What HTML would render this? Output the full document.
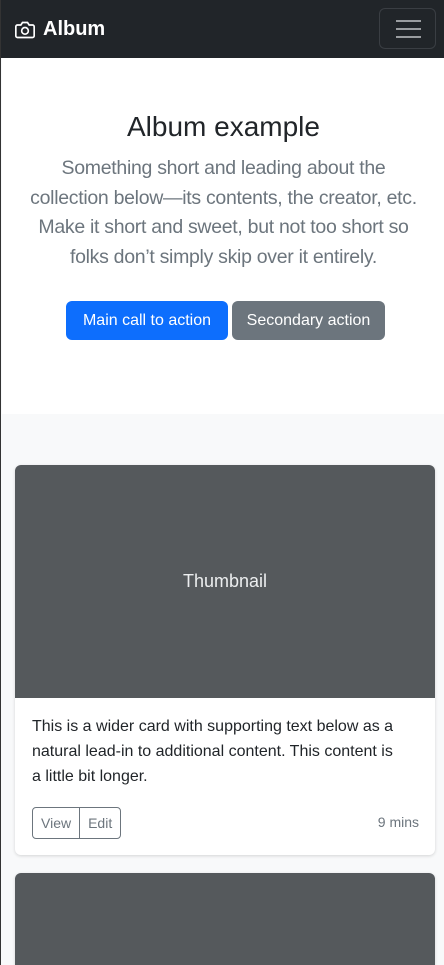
<!DOCTYPE html>
<html><head><meta charset="utf-8"><style>
*{box-sizing:border-box;margin:0;padding:0}
html{width:444px;height:965px;overflow:hidden}
body{width:444px;height:965px;overflow:hidden;font-family:"Liberation Sans",sans-serif;background:#f8f9fa;position:relative;border-left:1px solid #333}
.nav{position:absolute;left:0;top:0;width:444px;height:58px;background:#212529}
.brand{position:absolute;left:13px;top:18px;color:#fff;font-weight:bold;font-size:20px;display:flex;align-items:center;gap:7px}
.tog{position:absolute;left:378px;top:8px;width:57px;height:41px;border:1px solid #3a3e43;border-radius:6px}
.tog i{position:absolute;left:16px;width:25px;height:2px;background:#9a9da0}
.hero{position:absolute;left:1px;top:58px;width:443px;height:356px;background:#fff;text-align:center}
h1{font-weight:300;font-size:28px;color:#212529;position:absolute;top:53px;width:100%}
.lead{position:absolute;top:96px;left:0;right:0;font-size:19.5px;letter-spacing:-0.3px;font-weight:300;line-height:29.5px;color:#6c757d;white-space:nowrap}
.btn{position:absolute;top:243px;height:39px;border-radius:6px;color:#fff;font-size:16px;line-height:39px;text-align:center}
.card{position:absolute;left:14px;width:420px;background:#fff;border-radius:6px;box-shadow:0 1px 3px rgba(0,0,0,.15);overflow:hidden}
.thumb{background:#55595c;height:233px;color:#eceeef;font-size:18px;display:flex;align-items:center;justify-content:center}
.txt{padding:16px 10px 0 17px;font-size:16px;line-height:25px;color:#212529;white-space:nowrap}
.grp{position:absolute;left:17px;top:342px;height:32px;border:1px solid #6c757d;border-radius:4px;display:flex;font-size:14px;color:#6c757d}
.grp span{padding:0 8px;line-height:30px}
</style></head><body>
<div class="nav">
<div class="brand"><svg width="22" height="20" viewBox="0 0 24 24" fill="none" stroke="#fff" stroke-width="2"><path d="M23 19a2 2 0 0 1-2 2H3a2 2 0 0 1-2-2V8a2 2 0 0 1 2-2h4l2-3h6l2 3h4a2 2 0 0 1 2 2z"/><circle cx="12" cy="13" r="4"/></svg>Album</div>
<div class="tog"><i style="top:11px"></i><i style="top:19px"></i><i style="top:27px"></i></div>
</div>
<div class="hero">
<h1>Album example</h1>
<p class="lead">Something short and leading about the<br>collection below—its contents, the creator, etc.<br>Make it short and sweet, but not too short so<br>folks don’t simply skip over it entirely.</p>
<div class="btn" style="left:64px;width:162px;background:#0d6efd">Main call to action</div>
<div class="btn" style="left:230px;width:153px;background:#6c757d">Secondary action</div>
</div>
<div class="card" style="top:465px;height:390px">
<div class="thumb">Thumbnail</div>
<div class="txt">This is a wider card with supporting text below as a<br>natural lead-in to additional content. This content is<br>a little bit longer.</div>
<div class="grp"><span style="border-right:1px solid #6c757d">View</span><span>Edit</span></div>
<div style="position:absolute;right:16px;top:349px;font-size:14px;color:#6c757d">9 mins</div>
</div>
<div class="card" style="top:873px;height:92px;border-radius:6px 6px 0 0;background:#55595c"></div>
</body></html>
